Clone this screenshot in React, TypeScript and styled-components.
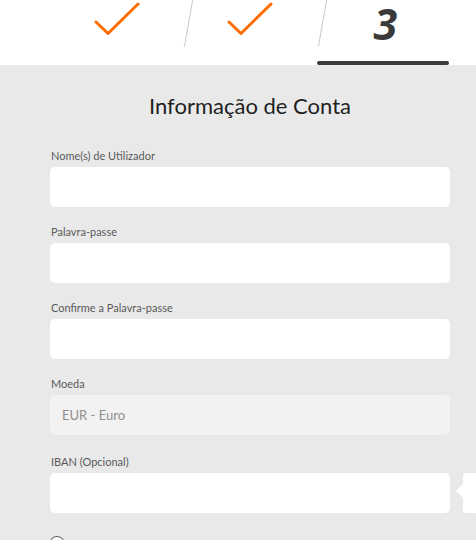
import React from "react";
import styled, { createGlobalStyle } from "styled-components";

const GlobalStyle = createGlobalStyle`
  html, body { margin: 0; padding: 0; }
  body {
    background: #e9e9e9;
    font-family: Lato, "Open Sans", Arial, sans-serif;
    overflow: hidden;
  }
`;

const Page = styled.div`
  width: 476px;
  height: 540px;
  overflow: hidden;
  display: flex;
  flex-direction: column;
`;

const Header = styled.header`
  flex-shrink: 0;
  background: #fff;
  height: 65px;
  padding-left: 50px;
  display: flex;
`;

const Steps = styled.div`
  width: 400px;
  display: grid;
  grid-template-columns: repeat(3, 1fr);
`;

const Step = styled.div<{ $divider?: boolean; $active?: boolean }>`
  position: relative;
  display: flex;
  justify-content: center;
  align-items: flex-start;
  ${(p) =>
    p.$divider &&
    `
    &::before {
      content: "";
      position: absolute;
      left: 5px;
      top: 0;
      width: 1px;
      height: 47px;
      background: #c9c9c9;
      transform: rotate(10deg);
    }
  `}
  ${(p) =>
    p.$active &&
    `
    &::after {
      content: "";
      position: absolute;
      left: 0;
      right: 1px;
      bottom: 0;
      height: 4px;
      border-radius: 2px;
      background: #3b3b3b;
    }
  `}
`;

const Check = styled.svg`
  margin-top: 2px;
  width: 46px;
  height: 36px;
`;

const StepNumber = styled.span`
  display: block;
  font-family: "Open Sans", Lato, sans-serif;
  font-weight: 700;
  font-style: italic;
  font-size: 43px;
  line-height: 58px;
  color: #3a3a3a;
  margin-top: -5px;
  padding: 0 6px;
  margin-left: 4px;
`;

const Content = styled.main`
  flex-shrink: 0;
  padding: 0 26px 0 50px;
`;

const Form = styled.div`
  width: 400px;
  display: flex;
  flex-direction: column;
`;

const Title = styled.h1`
  margin: 26px 0 27px;
  text-align: center;
  font-family: Lato, sans-serif;
  font-weight: 400;
  font-size: 22px;
  line-height: 30px;
  color: #1f1f1f;
`;

const Field = styled.div<{ $extra?: number }>`
  display: flex;
  flex-direction: column;
  gap: 3px;
  margin-bottom: ${(p) => 17 + (p.$extra || 0)}px;
  position: relative;
`;

const Label = styled.label`
  font-size: 11px;
  line-height: 16px;
  color: #5a5a5a;
  padding-left: 1px;
`;

const Input = styled.div<{ $disabled?: boolean }>`
  height: 40px;
  border-radius: 5px;
  background: ${(p) => (p.$disabled ? "#f2f2f2" : "#fff")};
  display: flex;
  align-items: center;
  padding: 0 12px;
  font-size: 13px;
  color: #8f8f8f;
`;

const Tooltip = styled.div`
  position: absolute;
  left: 413px;
  bottom: 0;
  width: 40px;
  height: 40px;
  background: #fff;
  border-radius: 3px;
  &::before {
    content: "";
    position: absolute;
    left: -7px;
    top: 11px;
    border-top: 7px solid transparent;
    border-bottom: 7px solid transparent;
    border-right: 7px solid #fff;
  }
`;

const Radio = styled.span`
  flex-shrink: 0;
  display: block;
  width: 14px;
  height: 14px;
  margin-left: 49px;
  border-radius: 50%;
  border: 1px solid #555;
  background: #fff;
`;

const CheckIcon = () => (
  <Check viewBox="0 0 46 36">
    <polyline
      points="2,20 14,31.5 44,2"
      fill="none"
      stroke="#ff6c00"
      strokeWidth="3"
      strokeLinecap="round"
      strokeLinejoin="round"
    />
  </Check>
);

export default function App() {
  return (
    <Page>
      <GlobalStyle />
      <Header>
        <Steps>
          <Step>
            <CheckIcon />
          </Step>
          <Step $divider>
            <CheckIcon />
          </Step>
          <Step $divider $active>
            <StepNumber>3</StepNumber>
          </Step>
        </Steps>
      </Header>
      <Content>
        <Form>
          <Title>Informação de Conta</Title>
          <Field>
            <Label>Nome(s) de Utilizador</Label>
            <Input />
          </Field>
          <Field>
            <Label>Palavra-passe</Label>
            <Input />
          </Field>
          <Field>
            <Label>Confirme a Palavra-passe</Label>
            <Input />
          </Field>
          <Field $extra={2}>
            <Label>Moeda</Label>
            <Input $disabled>EUR - Euro</Input>
          </Field>
          <Field $extra={6}>
            <Label>IBAN (Opcional)</Label>
            <Input />
            <Tooltip />
          </Field>
        </Form>
      </Content>
      <Radio />
    </Page>
  );
}
